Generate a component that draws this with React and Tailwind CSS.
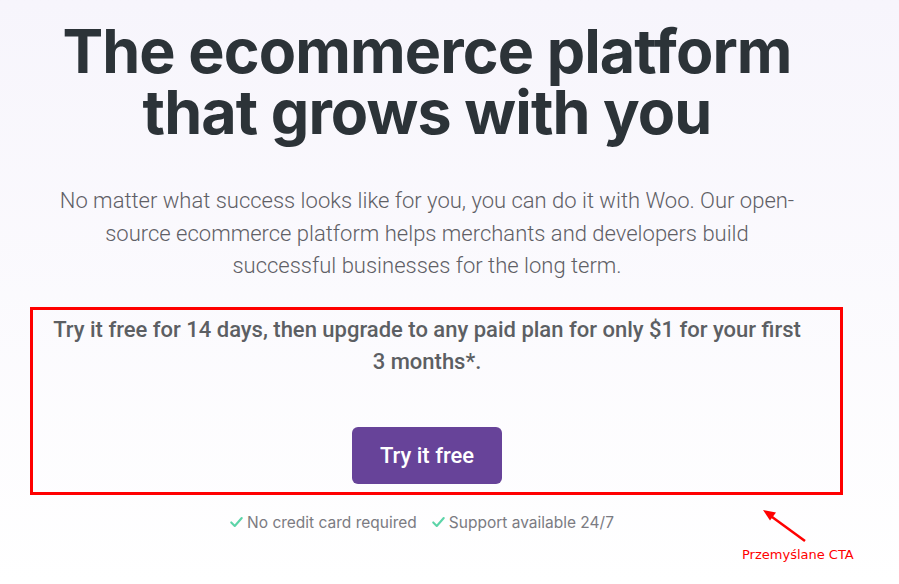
import React from 'react';

const Check = () => (
  <svg width="15" height="14" viewBox="0 0 16 16" fill="none" className="shrink-0">
    <path d="M2 8.5l4 4 8-9" stroke="#5cd4a8" strokeWidth="2.4" strokeLinecap="round" strokeLinejoin="round" />
  </svg>
);

const App = () => {
  return (
    <div className="relative w-[899px] h-[584px] overflow-hidden bg-gradient-to-b from-[#f7f5fc] to-[#ffffff] font-['Inter',sans-serif]">
      <div className="w-[854px] flex flex-col items-center pt-[21px]">
        <h1 className="text-center text-[61px] leading-[61px] font-bold tracking-[-0.9px] text-[#2c3338]">
          The ecommerce platform
          <br />
          that grows with you
        </h1>

        <p className="mt-[42px] w-[752px] text-center text-[22px] leading-[32.5px] font-light text-[#5f5f66] font-['Roboto',sans-serif]">
          No matter what success looks like for you, you can do it with Woo. Our open-source ecommerce platform helps merchants and developers build successful businesses for the long term.
        </p>

        <p className="mt-[31px] w-[760px] text-center text-[22px] leading-[32px] font-medium text-[#5c5f63] font-['Roboto',sans-serif]">
          Try it free for 14 days, then upgrade to any paid plan for only $1 for your first 3 months*.
        </p>

        <button className="mt-[49px] w-[150px] h-[57px] rounded-[6px] bg-[#674399] text-white text-[22px] font-medium font-['Roboto',sans-serif]">
          Try it free
        </button>

        <div className="mt-[29px] mr-[11px] flex items-center gap-[14px] text-[15.5px] leading-[19px] text-[#7b7b82]">
          <div className="flex items-center gap-[3px]">
            <Check />
            <span>No credit card required</span>
          </div>
          <div className="flex items-center gap-[3px]">
            <Check />
            <span>Support available 24/7</span>
          </div>
        </div>
      </div>

      <div className="absolute left-[30px] top-[307px] w-[813px] h-[188px] border-[3px] border-[#ff0000]" />

      <svg className="absolute left-[760px] top-[505px]" width="50" height="40" viewBox="0 0 50 40">
        <path d="M45 36L8 9" stroke="#ff0000" strokeWidth="2.5" />
        <path d="M3 5l13 2.5-6 8z" fill="#ff0000" />
      </svg>
      <div className="absolute left-[742px] top-[545px] text-[13px] text-[#ff0000] font-['DejaVu_Sans',sans-serif]">
        Przemyślane CTA
      </div>
    </div>
  );
};

export default App;
